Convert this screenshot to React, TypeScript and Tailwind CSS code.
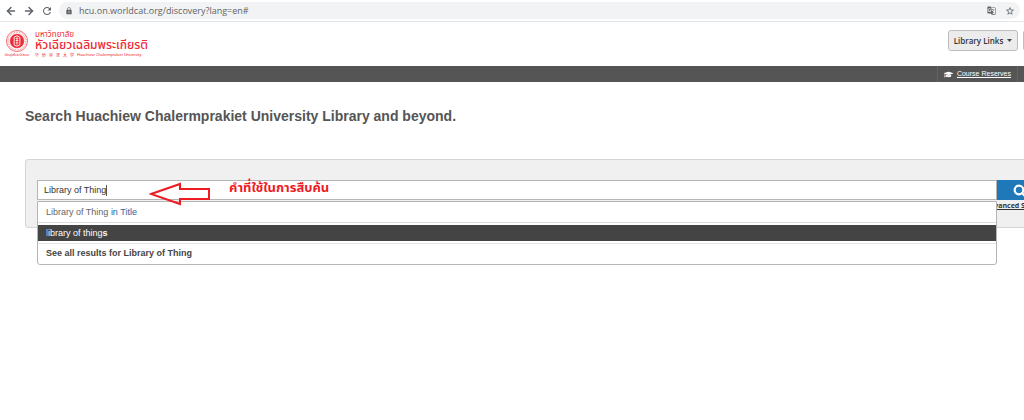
import * as React from "react";
import { ArrowLeft, ArrowRight, Search } from "lucide-react";
import { FaGraduationCap } from "react-icons/fa";
import { MdGTranslate, MdLock, MdRefresh, MdStarBorder } from "react-icons/md";

function BrowserBar() {
  return (
    <div className="flex h-[22px] items-center border-b border-[#e4e6e8] bg-white pr-1 text-[#5f6368]">
      <div className="flex w-[59px] shrink-0 items-center gap-[6px] pl-[5px]">
        <button type="button" aria-label="Back">
          <ArrowLeft className="size-3" strokeWidth={3} />
        </button>
        <button type="button" aria-label="Forward">
          <ArrowRight className="size-3" strokeWidth={3} />
        </button>
        <button type="button" aria-label="Reload">
          <MdRefresh className="size-3" />
        </button>
      </div>
      <div className="flex h-[17px] min-w-0 flex-1 items-center rounded-full bg-[#f1f3f4] pr-[5px] pl-[6px]">
        <MdLock className="size-2 shrink-0" />
        <input
          aria-label="Address"
          className="ml-[6px] w-[70px] flex-1 bg-transparent font-['Open_Sans',sans-serif] text-[9px] leading-4 text-[#5f6368] outline-none"
          defaultValue="hcu.on.worldcat.org/discovery?lang=en#"
        />
        <button type="button" aria-label="Translate" className="mr-[9px]">
          <MdGTranslate className="size-[9px]" />
        </button>
        <button type="button" aria-label="Bookmark">
          <MdStarBorder className="size-[10px]" />
        </button>
      </div>
    </div>
  );
}

function Seal() {
  return (
    <svg viewBox="0 0 46 46" className="size-[22px]" fill="none" stroke="#ee2a35">
      <circle cx="23" cy="23" r="22" strokeWidth="1.4" />
      <circle cx="23" cy="23" r="18.5" strokeWidth="3" strokeDasharray="1.5 2" opacity="0.5" />
      <circle cx="23" cy="23" r="14.5" fill="#ee2a35" />
      <path d="M17 15l6-3 6 3v16l-6 3-6-3z" stroke="#fff" strokeWidth="2" />
      <path d="M20 18h6M20 22h6M20 27h6M23 15v16" stroke="#fff" strokeWidth="1.5" />
    </svg>
  );
}

function Logo() {
  return (
    <div className="flex items-start gap-[6px] pl-[5px] text-[#ee2a35]">
      <div className="flex w-6 flex-col items-center">
        <Seal />
        <span className="text-[3px] leading-[6px] whitespace-nowrap">เรียนรู้เพื่อรับใช้สังคม</span>
      </div>
      <div className="flex flex-col whitespace-nowrap">
        <span className="text-[8px] leading-[9px]">มหาวิทยาลัย</span>
        <span className="text-[12px] leading-[13px] font-medium">หัวเฉียวเฉลิมพระเกียรติ</span>
        <span className="flex items-center text-[4px] leading-[6px]">
          <span className="font-['Noto_Sans_CJK_SC',sans-serif] tracking-[3px]">华侨崇圣大学</span>
          <span>Huachiew Chalermprakiet University</span>
        </span>
      </div>
    </div>
  );
}

function Header() {
  return (
    <header>
      <div className="flex h-11 items-start justify-between overflow-hidden pt-2">
        <Logo />
        <div className="-mr-6 flex gap-[5px]">
          <button
            type="button"
            className="flex h-[21px] w-[70px] items-center justify-center gap-1 rounded-[3px] border border-[#bdbdbd] bg-[#ececec] font-['Open_Sans',sans-serif] text-[8px] font-semibold whitespace-nowrap text-[#333]"
          >
            Library Links
            <svg viewBox="0 0 10 6" className="h-[3px] w-[5px]" fill="#444">
              <path d="M0 0h10L5 6z" />
            </svg>
          </button>
          <button
            type="button"
            aria-label="Account"
            className="h-[21px] w-[25px] rounded-[3px] border border-[#bdbdbd] bg-[#ececec]"
          />
        </div>
      </div>
      <nav className="flex h-4 items-center justify-end bg-[#555] text-[7px] text-white">
        <div className="flex h-full items-center gap-1 border-x border-[#636363] px-[6px]">
          <FaGraduationCap className="size-[9px]" />
          <a href="#course-reserves" className="underline">
            Course Reserves
          </a>
        </div>
        <div className="w-[6px]" />
      </nav>
    </header>
  );
}

function Annotation() {
  return (
    <div className="pointer-events-none absolute top-0 left-[112px] z-20 flex items-start gap-[18px]">
      <svg viewBox="0 0 62 24" className="mt-[2px] h-6 w-[62px]" fill="none" stroke="#ed1c24" strokeWidth="2">
        <path d="M2 12L31 2v5h29v10H31v5z" />
      </svg>
      <span className="text-[13px] leading-4 font-bold whitespace-nowrap text-[#ed1c24]">
        คำที่ใช้ในการสืบค้น
      </span>
    </div>
  );
}

function Suggestions() {
  return (
    <ul className="absolute top-[21px] right-0 left-0 z-10 rounded-b-[3px] border border-[#b5b5b5] bg-white text-[9px] leading-[20px]">
      <li className="h-[21px] border-b border-[#ddd] px-2 text-[#666]">
        Library of Thing <span className="text-[#2a64a6]">in Title</span>
      </li>
      <li className="mt-[2px] h-4 bg-[#444] px-2 leading-4 text-white">
        <span className="text-[#9cc9ee]">l</span>ibrary of thing<b>s</b>
      </li>
      <li className="mt-[2px] h-[21px] border-t border-[#e5e5e5] px-2 leading-[18px] font-bold text-[#444]">
        See all results for Library of Thing
      </li>
    </ul>
  );
}

function SearchPanel() {
  const [query, setQuery] = React.useState("Library of Thing");

  return (
    <form
      className="-mr-6 ml-[25px] h-[69px] rounded-[3px] border border-[#d5d5d5] bg-[#f0f0f0] pt-5 pl-[11px]"
      onSubmit={e => e.preventDefault()}
    >
      <div className="flex">
        <div className="relative min-w-0 flex-1">
          <div className="flex h-5 items-center border border-[#b5b5b5] bg-white pl-[6px]">
            <input
              aria-label="Search"
              className="[field-sizing:content] bg-transparent pt-px text-[9px] text-[#333] outline-none"
              value={query}
              onChange={e => setQuery(e.target.value)}
            />
            <span className="h-[11px] w-px bg-[#555]" />
          </div>
          <Suggestions />
          <Annotation />
        </div>
        <div className="relative w-[50px]">
          <button
            type="submit"
            aria-label="Submit search"
            className="flex h-5 w-full items-center bg-[#1f78b8] pl-4 text-white"
          >
            <Search className="size-[13px]" strokeWidth={4} />
          </button>
          <a
            href="#advanced"
            className="absolute top-[22px] -left-[12px] font-['Open_Sans',sans-serif] text-[7px] leading-2 font-bold whitespace-nowrap text-[#333] underline"
          >
            Advanced Search
          </a>
        </div>
      </div>
    </form>
  );
}

export default function App() {
  return (
    <div className="min-h-screen overflow-hidden bg-white font-['Liberation_Sans','Noto_Sans_Thai',Arial,sans-serif]">
      <BrowserBar />
      <Header />
      <main>
        <h1 className="mt-6 mb-[33px] ml-[25px] text-[14px] leading-5 font-bold text-[#555]">
          Search Huachiew Chalermprakiet University Library and beyond.
        </h1>
        <SearchPanel />
      </main>
    </div>
  );
}
